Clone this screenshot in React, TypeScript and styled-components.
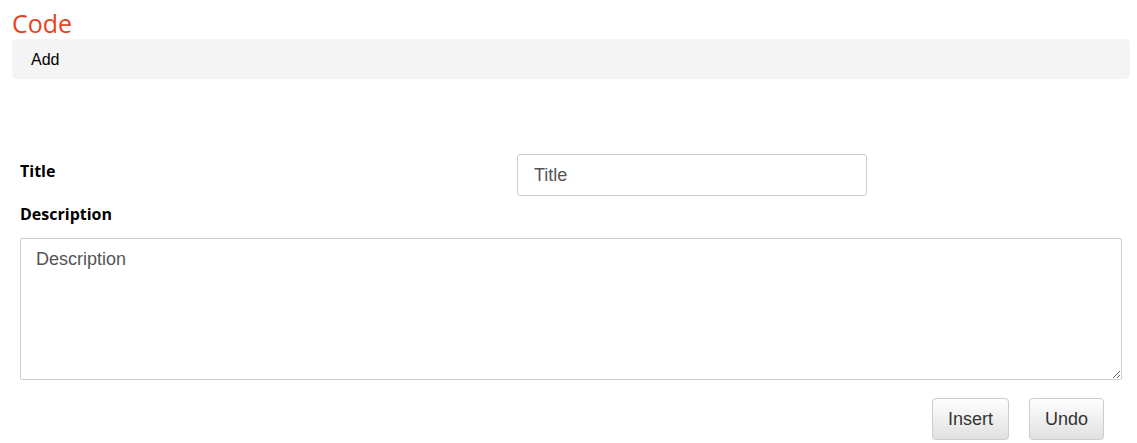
import styled, { createGlobalStyle } from "styled-components";

const GlobalStyle = createGlobalStyle`
  body {
    margin: 0;
    background: #fff;
    font-family: "Liberation Sans", Arial, sans-serif;
  }
`;

const Page = styled.div`
  padding: 0 7px 0 12px;
`;

const Heading = styled.h1`
  margin: 7px 0 0 0;
  font-family: "Open Sans", sans-serif;
  font-weight: 400;
  font-size: 25px;
  line-height: 32px;
  color: #e8411f;
`;

const Toolbar = styled.div`
  display: flex;
  align-items: center;
  box-sizing: border-box;
  height: 40px;
  padding: 2px 0 0 19px;
  background: #f4f4f4;
  border-radius: 5px;
  font-size: 16px;
  color: #000;
`;

const Form = styled.form`
  padding: 0 8px;
  margin-top: 75px;
`;

const Row = styled.div`
  display: flex;
  align-items: flex-start;
`;

const Label = styled.label<{ $width?: number }>`
  display: block;
  width: ${(p) => (p.$width ? `${p.$width}px` : "auto")};
  padding-top: ${(p) => (p.$width ? "6px" : "0")};
  font-family: "Open Sans", sans-serif;
  font-weight: 700;
  font-size: 16px;
  line-height: 22px;
  color: #000;
`;

const DescLabel = styled(Label)`
  margin-top: 7px;
`;

const TextInput = styled.input`
  box-sizing: border-box;
  width: 350px;
  height: 42px;
  padding: 0 16px;
  border: 1px solid #ccc;
  border-radius: 3px;
  font-family: "Liberation Sans", Arial, sans-serif;
  font-size: 18px;
  color: #555;
  outline: none;

  &::placeholder {
    color: #555;
  }
`;

const TextArea = styled.textarea`
  display: block;
  box-sizing: border-box;
  width: 100%;
  height: 142px;
  margin-top: 13px;
  padding: 8px 15px;
  border: 1px solid #ccc;
  border-radius: 2px;
  font-family: "Liberation Sans", Arial, sans-serif;
  font-size: 18px;
  line-height: 24px;
  color: #555;
  outline: none;

  &::placeholder {
    color: #555;
  }
`;

const Actions = styled.div`
  display: flex;
  justify-content: flex-end;
  gap: 20px;
  margin-top: 18px;
  padding-right: 18px;
`;

const Button = styled.button`
  height: 42px;
  padding: 0 15px;
  border: 1px solid #ccc;
  border-radius: 4px;
  background: linear-gradient(to bottom, #fff 0%, #e0e0e0 100%);
  box-shadow: inset 0 1px 0 rgba(255, 255, 255, 0.15), 0 1px 1px rgba(0, 0, 0, 0.075);
  font-family: "Liberation Sans", Arial, sans-serif;
  font-size: 18px;
  color: #333;
  cursor: pointer;
`;

function App() {
  return (
    <>
      <GlobalStyle />
      <Page>
        <Heading>Code</Heading>
        <Toolbar>Add</Toolbar>
        <Form onSubmit={(e) => e.preventDefault()}>
          <Row>
            <Label $width={497} htmlFor="title">
              Title
            </Label>
            <TextInput id="title" placeholder="Title" />
          </Row>
          <DescLabel htmlFor="description">Description</DescLabel>
          <TextArea id="description" placeholder="Description" />
          <Actions>
            <Button type="submit">Insert</Button>
            <Button type="button">Undo</Button>
          </Actions>
        </Form>
      </Page>
    </>
  );
}

export default App;
